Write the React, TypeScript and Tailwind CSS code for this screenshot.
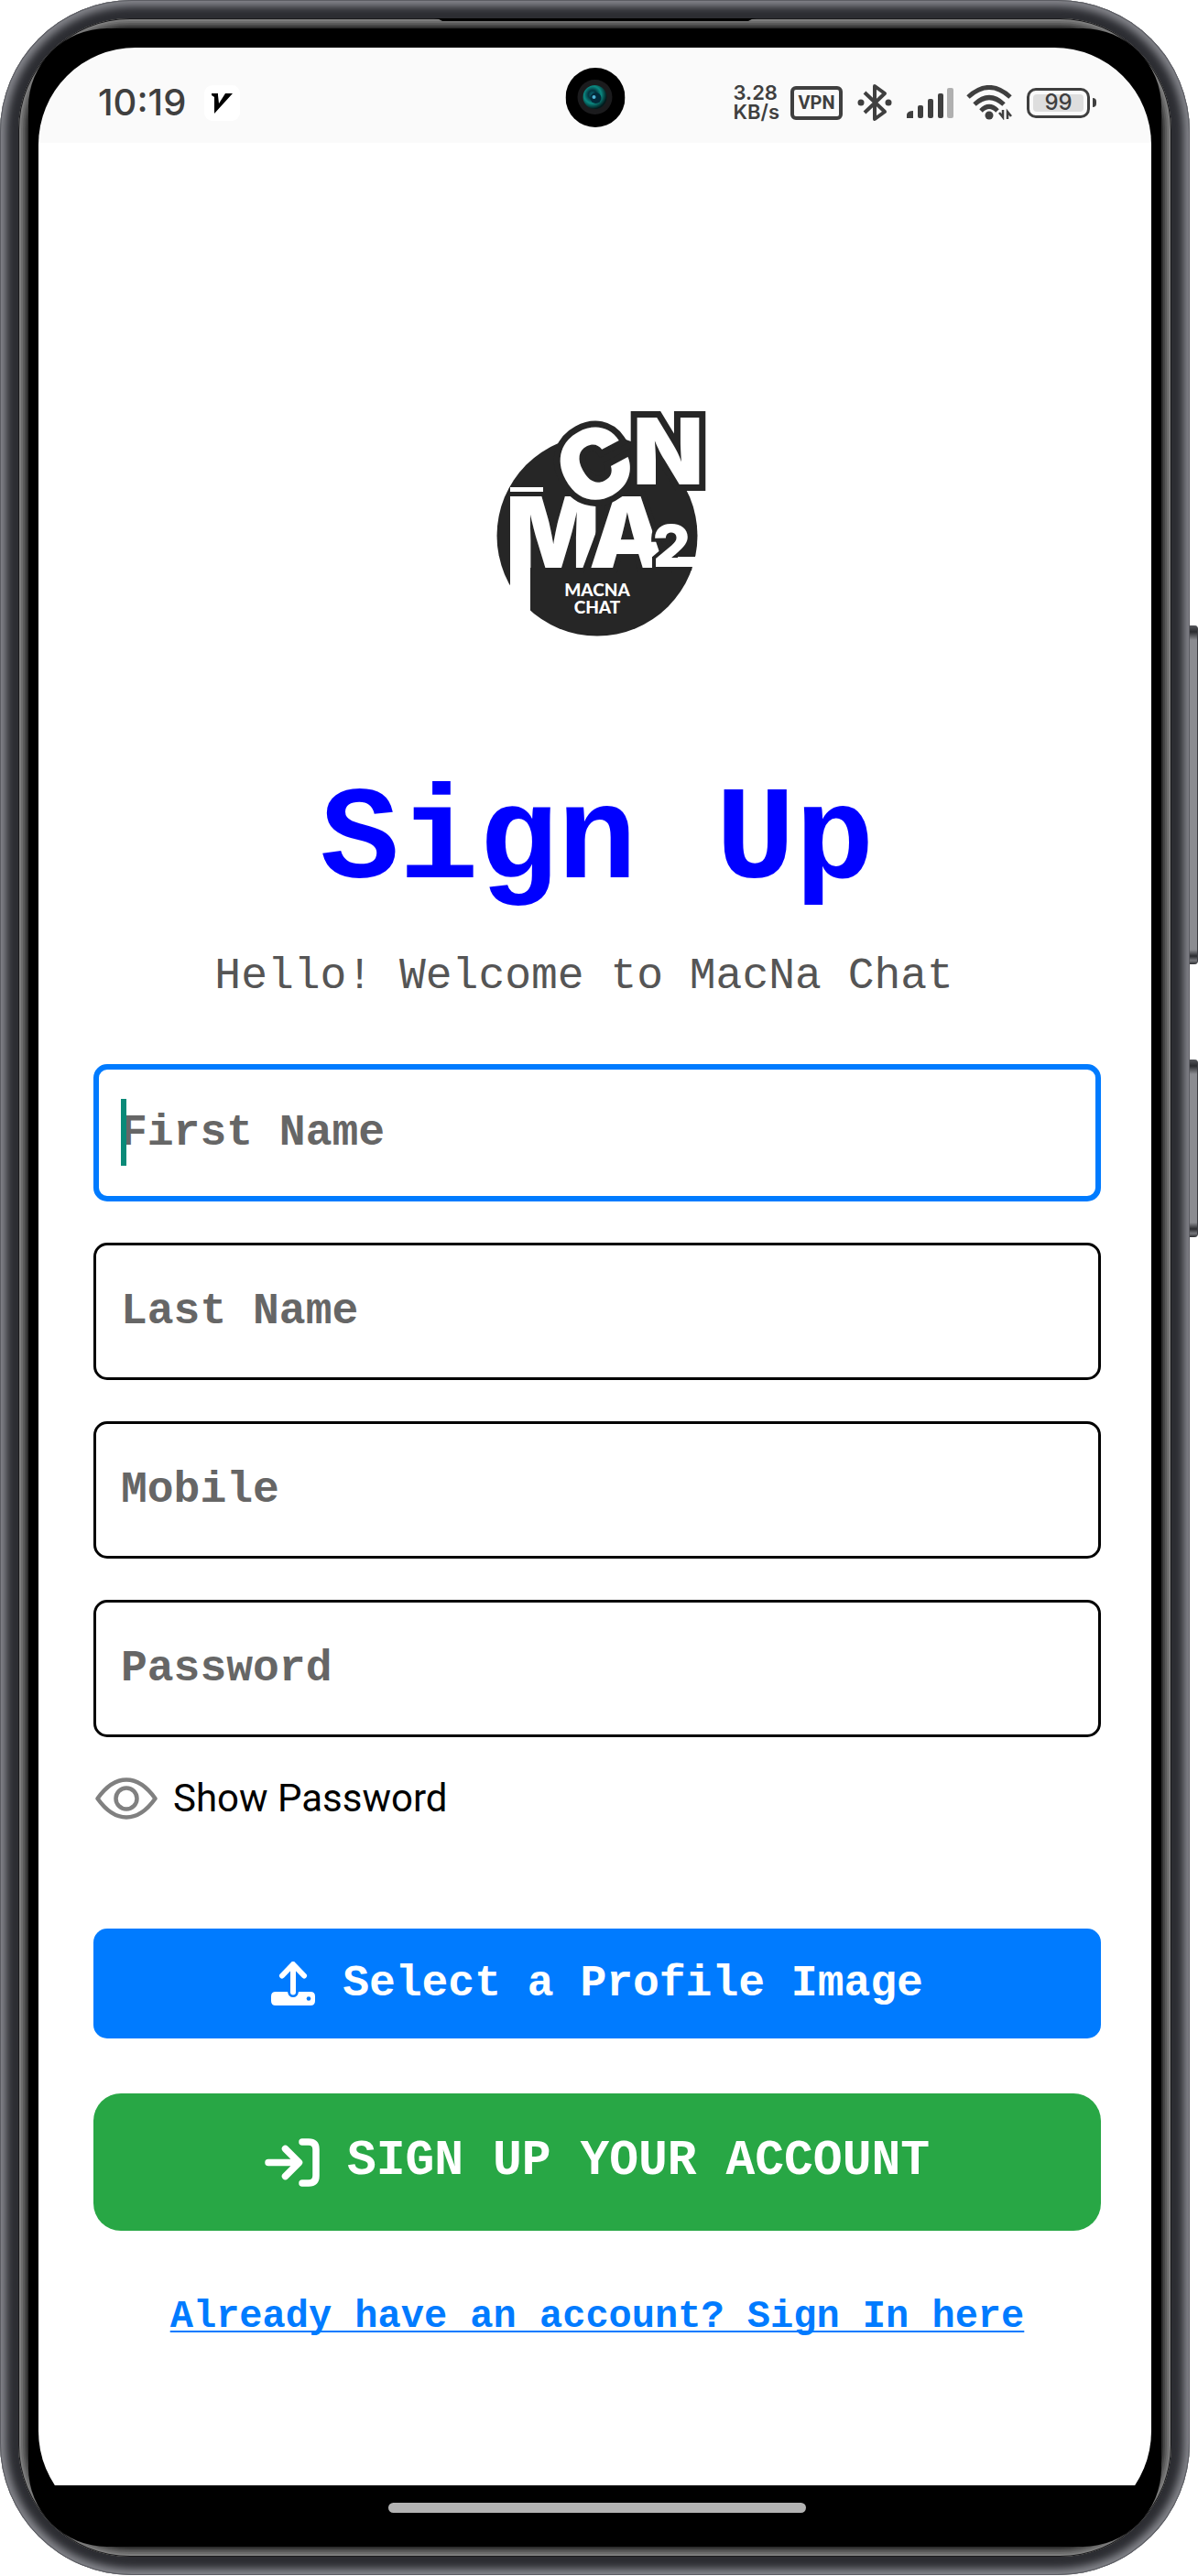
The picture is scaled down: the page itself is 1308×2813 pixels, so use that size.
import React, { useState } from "react";

const INK = "#262626";

function SideButton({ className }: { className: string }) {
  return (
    <span
      className={`absolute right-0 w-[9px] rounded-r-sm border-r border-[#3c3d42] bg-[linear-gradient(to_bottom,#55565b_0px,#2a2b2f_7px,#8b8c91_16px,#8b8c91_calc(100%_-_16px),#2a2b2f_calc(100%_-_9px),#77787d_calc(100%_-_4px),#2a2b2f_100%)] ${className}`}
    />
  );
}

function Earpiece() {
  return (
    <svg className="absolute top-[20px] left-1/2 w-[352px] -translate-x-1/2" height="4" viewBox="0 0 352 4" aria-hidden="true">
      <path d="M0 0H352Q347 0 343 3H9Q5 0 0 0Z" fill="#000" />
    </svg>
  );
}

function Camera() {
  return (
    <svg className="absolute top-[22px] left-1/2 -translate-x-1/2" width="65" height="65" viewBox="0 0 65 65" aria-hidden="true">
      <defs>
        <radialGradient id="lens" cx="0.4" cy="0.4" r="0.6">
          <stop offset="0" stopColor="#0b6f7a" />
          <stop offset="0.3" stopColor="#04343f" />
          <stop offset="0.6" stopColor="#0b8a82" />
          <stop offset="1" stopColor="#021a1c" />
        </radialGradient>
      </defs>
      <circle cx="32.5" cy="32.5" r="32.5" fill="#000" />
      <circle cx="32" cy="32" r="19" fill="#1b1b1d" />
      <circle cx="32" cy="32" r="13" fill="url(#lens)" />
      <circle cx="33" cy="33" r="6" fill="#032a3a" />
      <circle cx="31" cy="32" r="2" fill="#4fb4d8" />
    </svg>
  );
}

function StatusBar() {
  return (
    <header className="relative flex h-[104px] items-center bg-[#fafafa] pt-4 pr-[60px] pl-[65px] text-[#3f3f3f]">
      <time className="font-['Inter',sans-serif] text-[40px] leading-[48px] font-medium">10:19</time>
      <svg className="ml-5" width="39" height="39" viewBox="0 0 39 39" aria-hidden="true">
        <rect width="39" height="39" rx="9" fill="#fff" />
        <path d="M8 9h7v2l1 9 7-11h8L11 31V13l-3-2z" fill="#000" />
      </svg>
      <Camera />
      <div className="ml-auto flex items-center">
        <div className="mr-3 font-['Inter',sans-serif] text-[22px] leading-[21px] font-semibold">
          <div>3.28</div>
          <div>KB/s</div>
        </div>
        <span className="mr-4 flex h-[37px] w-[57px] items-center justify-center rounded-md border-4 border-[#3f3f3f] font-['Roboto',sans-serif] text-xl leading-none font-bold">
          VPN
        </span>
        <svg className="mr-4" width="38" height="42" viewBox="0 0 38 42" fill="none" stroke="currentColor" strokeWidth="4" aria-hidden="true">
          <path d="M8 10L30 31 19 39V3L30 11 8 32" strokeLinejoin="round" />
          <circle cx="4" cy="21" r="3.5" fill="currentColor" stroke="none" />
          <circle cx="34" cy="21" r="3.5" fill="currentColor" stroke="none" />
        </svg>
        <svg className="mr-3.5" width="51" height="33" viewBox="0 0 51 33" fill="currentColor" aria-hidden="true">
          <path d="M0 33v-4q1-4 7-4v8z" />
          <rect x="12" y="19" width="6" height="14" rx="2" />
          <rect x="23" y="12" width="6" height="21" rx="2" />
          <rect x="34" y="6" width="6" height="27" rx="2" />
          <rect x="44" y="0" width="7" height="33" rx="2" fill="#b0b0b0" />
        </svg>
        <svg className="mr-4" width="50" height="38" viewBox="0 0 50 38" fill="none" stroke="currentColor" strokeWidth="5" aria-hidden="true">
          <path d="M2 13Q25-8 48 13" />
          <path d="M9 21Q25 6 41 21" />
          <path d="M16 28Q25 19 34 28" />
          <circle cx="25" cy="33" r="4.5" fill="currentColor" stroke="none" />
          <path d="M36 30l4 5V27M45 37V29l4 5" strokeWidth="2.5" />
        </svg>
        <span className="flex h-[33px] w-[69px] rounded-[10px] border-3 border-[#3f3f3f] p-1">
          <span className="flex flex-1 items-center justify-center rounded-sm bg-[#dedede] font-['Inter',sans-serif] text-2xl leading-none font-medium">
            99
          </span>
        </span>
        <span className="ml-[3px] h-[10px] w-[4px] rounded-r-sm bg-[#3f3f3f]" />
      </div>
    </header>
  );
}

function Logo() {
  return (
    <svg
      className="h-[300px] w-[300px]"
      viewBox="2 0 300 300"
      role="img"
      aria-label="MacNa Chat"
      fontFamily="Inter, sans-serif"
      fontWeight="900"
      fill="#fff"
      stroke={INK}
      paintOrder="stroke"
    >
      <circle cx="152" cy="165" r="109.5" fill={INK} stroke="none" />
      <rect x="57" y="112" width="36" height="5" stroke="none" />
      <text x="53" y="200" fontSize="107" stroke="none">M</text>
      <rect x="57" y="122" width="22" height="131" stroke="none" />
      <path d="M136 201L152 158V201Z" fill={INK} stroke="none" />
      <text x="143" y="200" fontSize="107" strokeWidth="12">A</text>
      <text x="213" y="199" fontSize="63" strokeWidth="8">2</text>
      <rect x="240" y="188" width="24" height="11" stroke="none" />
      <text transform="rotate(-28 149 87)" x="149" y="125" textAnchor="middle" fontSize="105" strokeWidth="14">C</text>
      <text x="191" y="109" fontSize="100" strokeWidth="14" strokeLinejoin="miter">N</text>
      <g stroke="none" fontFamily="Lato, sans-serif" fontSize="19" textAnchor="middle">
        <text x="152" y="231">MACNA</text>
        <text x="152" y="250">CHAT</text>
      </g>
    </svg>
  );
}

function EyeIcon() {
  return (
    <svg width="68" height="46" viewBox="0 0 68 46" fill="none" stroke="#808080" strokeWidth="4.5" strokeLinejoin="round" aria-hidden="true">
      <path d="M2.5 23Q17 2.5 34 2.5T65.500 23Q51 43.5 34 43.5T2.5 23Z" />
      <circle cx="34" cy="23" r="11.5" />
    </svg>
  );
}

function UploadIcon() {
  return (
    <svg width="48" height="48" viewBox="0 0 48 48" fill="none" aria-hidden="true">
      <path d="M5 33H18Q19 39 24 39T30 33H43Q48 33 48 38V43Q48 48 43 48H5Q0 48 0 43V38Q0 33 5 33Z" fill="#fff" />
      <path d="M24 33.500V4M12 15.500L24 3 36 15.500" stroke="#fff" strokeWidth="6" strokeLinecap="round" strokeLinejoin="round" />
      <circle cx="41" cy="40.5" r="2.3" fill="#007bff" />
    </svg>
  );
}

function EnterIcon() {
  return (
    <svg width="60" height="53" viewBox="0 0 60 53" fill="none" stroke="#fff" strokeWidth="7.5" strokeLinecap="round" strokeLinejoin="round" aria-hidden="true">
      <path d="M4 26.5H37M22.5 11.5L37.5 26.5 22.5 41.5" />
      <path d="M41 4H48Q56 4 56 12V41Q56 49 48 49H41" />
    </svg>
  );
}

const fields = [
  { id: "first-name", label: "First Name", type: "text", focused: true },
  { id: "last-name", label: "Last Name", type: "text", focused: false },
  { id: "mobile", label: "Mobile", type: "tel", focused: false },
  { id: "password", label: "Password", type: "password", focused: false },
];

const fieldBase =
  "block h-[150px] w-full rounded-[15px] bg-white font-['Liberation_Mono',monospace] text-5xl font-bold text-black caret-[#0a8a78] outline-none placeholder:text-[#666666] placeholder:opacity-100";

export default function App() {
  const [values, setValues] = useState<Record<string, string>>({});
  const [showPassword, setShowPassword] = useState(false);

  return (
    <div className="relative bg-white pr-[9px]">
      <SideButton className="top-[683px] h-[370px]" />
      <SideButton className="top-[1157px] h-[194px]" />
      <div className="relative rounded-[144px] bg-[#2c2d32] p-[20px] shadow-[inset_0_0_0_1px_#5c5d63,inset_0_0_9px_7px_#85868c]">
        <Earpiece />
        <div className="rounded-[122px] bg-black p-[11px] shadow-[inset_0_0_0_1px_#1a1a1c,inset_0_0_0_3px_#7c7c7c,inset_0_0_0_5px_#6c6c6c,inset_0_0_0_7px_#5a5a5a,inset_0_0_0_9px_#464646,inset_0_0_0_11px_#2e2e2e]">
          <div className="rounded-[86px] bg-black px-[11px] pt-[21px] pb-[20px]">
            <div className="overflow-hidden rounded-[106px]">
              <StatusBar />
              <main className="flex flex-col items-center bg-white pt-[264px] pr-[55px] pb-[154px] pl-[60px]">
                <Logo />
                <h1 className="mt-[128px] font-['Liberation_Mono',monospace] text-[144px] leading-[144px] font-bold whitespace-nowrap text-[#0000ff]">
                  Sign Up
                </h1>
                <p className="mt-[44px] font-['Liberation_Mono',monospace] text-5xl leading-[60px] whitespace-nowrap text-[#555555]">
                  Hello! Welcome to MacNa Chat&nbsp;
                </p>
                <form className="mt-[66px] flex w-full flex-col" onSubmit={(e) => e.preventDefault()}>
                  <div className="flex flex-col gap-[45px]">
                    {fields.map((f) => (
                      <div key={f.id} className="relative">
                        <input
                          id={f.id}
                          aria-label={f.label}
                          type={f.type === "password" && showPassword ? "text" : f.type}
                          placeholder={f.label}
                          value={values[f.id] ?? ""}
                          onChange={(e) => setValues({ ...values, [f.id]: e.target.value })}
                          className={`${fieldBase} ${f.focused ? "border-6 border-[#007bff] px-[24px]" : "border-3 border-black px-[27px]"}`}
                        />
                        {f.focused && !values[f.id] && <span className="absolute top-[38px] left-[30px] h-[73px] w-[6px] bg-[#0a8a78]" />}
                      </div>
                    ))}
                  </div>
                  <button
                    type="button"
                    onClick={() => setShowPassword(!showPassword)}
                    className="mt-[37px] flex h-[60px] items-center gap-[17px] self-start pl-[2px] font-['Roboto',sans-serif] text-[42px] leading-[60px] font-normal text-black"
                  >
                    <EyeIcon />
                    Show Password
                  </button>
                  <button
                    type="button"
                    className="mt-[112px] flex h-[120px] w-full items-center justify-center gap-[30px] rounded-[15px] bg-[#007bff] font-['Liberation_Mono',monospace] text-5xl font-bold text-white"
                  >
                    <UploadIcon />
                    Select a Profile Image
                  </button>
                  <button
                    type="submit"
                    className="mt-[60px] flex h-[150px] w-full items-center justify-center gap-[30px] rounded-[30px] bg-[#28a745] font-['Liberation_Mono',monospace] text-[53px] font-bold text-white"
                  >
                    <EnterIcon />
                    SIGN UP YOUR ACCOUNT
                  </button>
                </form>
                <a
                  href="#sign-in"
                  className="mt-[64px] font-['Liberation_Mono',monospace] text-[42px] leading-[60px] font-bold whitespace-nowrap text-[#007bff] underline decoration-2 underline-offset-4 [text-decoration-skip-ink:none]"
                >
                  Already have an account? Sign In here
                </a>
              </main>
              <nav className="flex h-[47px] justify-center bg-black pt-[19px] pl-[4px]" aria-label="Home gesture">
                <span className="h-[11px] w-[456px] rounded-full bg-[#b3b3b3]" />
              </nav>
            </div>
          </div>
        </div>
      </div>
    </div>
  );
}
